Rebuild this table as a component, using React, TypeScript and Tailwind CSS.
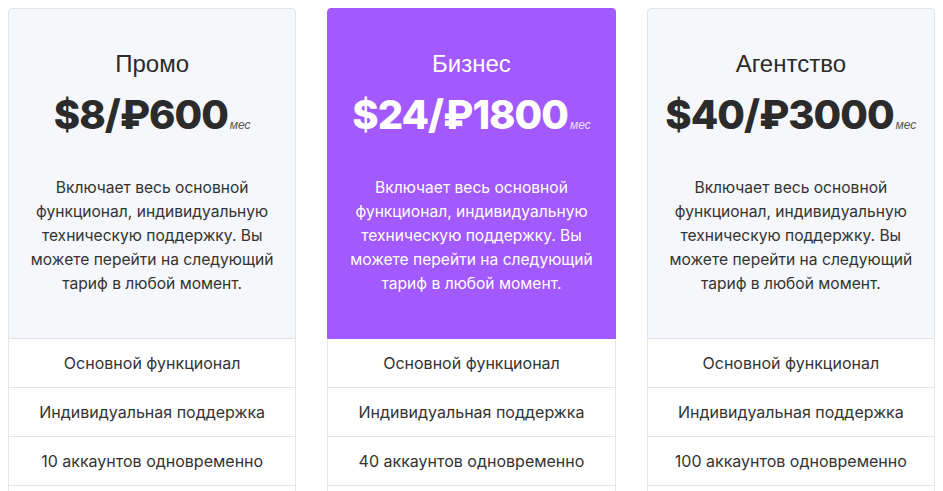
import React from 'react';

type Plan = {
  name: string;
  price: string;
  features: string[];
  featured?: boolean;
};

const PLANS: Plan[] = [
  { name: 'Промо', price: '$8/₽600', features: ['Основной функционал', 'Индивидуальная поддержка', '10 аккаунтов одновременно'] },
  { name: 'Бизнес', price: '$24/₽1800', featured: true, features: ['Основной функционал', 'Индивидуальная поддержка', '40 аккаунтов одновременно'] },
  { name: 'Агентство', price: '$40/₽3000', features: ['Основной функционал', 'Индивидуальная поддержка', '100 аккаунтов одновременно'] },
];

const DESCRIPTION =
  'Включает весь основной функционал, индивидуальную техническую поддержку. Вы можете перейти на следующий тариф в любой момент.';

const PlanCard: React.FC<{ plan: Plan }> = ({ plan }) => {
  const head = plan.featured
    ? 'bg-[#a259fe] border-[#a259fe] text-white'
    : 'bg-[#f5f7fa] border-[#dfe3e8] text-[#2b2b2b]';
  return (
    <div className="flex flex-col">
      <div className={`rounded-t-[4px] border px-4 pt-10 pb-[42px] text-center ${head}`}>
        <h3 className="text-[24px] leading-[29px] font-normal font-['Liberation_Sans',sans-serif]">{plan.name}</h3>
        <div className="mt-3 flex items-baseline justify-center">
          <span className="text-[40px] leading-[50px] font-extrabold font-['Inter',sans-serif] tracking-[-1px]">{plan.price}</span>
          <span className={`ml-0.5 text-[12px] italic font-['Liberation_Sans',sans-serif] ${plan.featured ? 'text-white/80' : 'text-[#555]'}`}>мес</span>
        </div>
        <p className={`mt-9 text-[15.6px] leading-6 font-['Inter',sans-serif] ${plan.featured ? 'text-white' : 'text-[#333]'}`}>
          {DESCRIPTION}
        </p>
      </div>
      {plan.features.map((f) => (
        <div
          key={f}
          className="h-[49px] border-x border-b border-[#e3e6ea] bg-white flex items-center justify-center text-[16px] text-[#333] font-['Inter',sans-serif]"
        >
          {f}
        </div>
      ))}
      <div className="h-[20px] border-x border-[#e3e6ea] bg-white" />
    </div>
  );
};

const App: React.FC = () => {
  return (
    <div className="min-h-screen bg-white overflow-hidden">
      <div className="grid grid-cols-3 gap-[31px] px-2 pt-2">
        {PLANS.map((p) => (
          <PlanCard key={p.name} plan={p} />
        ))}
      </div>
    </div>
  );
};

export default App;
